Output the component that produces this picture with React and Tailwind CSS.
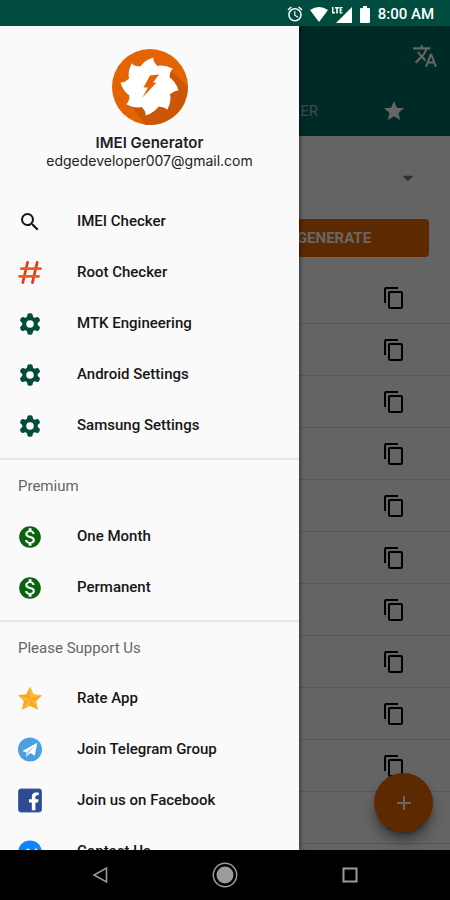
import {
  MdAlarm,
  MdArrowDropDown,
  MdAdd,
  MdContentCopy,
  MdMonetizationOn,
  MdSearch,
  MdStar,
  MdTranslate,
} from "react-icons/md";
import { FaFacebookF, FaFacebookMessenger } from "react-icons/fa";

function HashIcon() {
  return (
    <svg viewBox="0 0 25 25" className="w-[25px] h-[25px]" fill="none" strokeWidth="2.8" strokeLinecap="round">
      <path d="M10 2 5 23M20 2 15 23" stroke="#e23a1c" />
      <path d="M3.5 8.5H23.5M1.5 16.5H21.5" stroke="#f05a1a" />
    </svg>
  );
}

function GearIcon() {
  return (
    <svg viewBox="0 0 24 24" className="w-6 h-6" fill="#064c3b">
      {[0, 60, 120, 180, 240, 300].map((angle) => (
        <path key={angle} d="M8.8 6 9.4 2.6Q9.6 1.2 12 1.2T14.6 2.6L15.2 6 12 8Z" transform={`rotate(${angle} 12 12)`} />
      ))}
      <circle cx="12" cy="12" r="5.8" fill="none" stroke="#064c3b" strokeWidth="4" />
    </svg>
  );
}

function RateIcon() {
  return (
    <svg viewBox="0 0 25 25" className="w-[25px] h-[25px]">
      <path
        d="M12.5 1 16 8.5 24.3 9.5 18.4 15.2 20.4 23.6 12.5 19.6 4.6 23.6 6.6 15.2 0.7 9.5 9 8.5Z"
        fill="#fdb62f"
        stroke="#fdb62f"
        strokeLinejoin="round"
      />
      <path d="M12.5 1V13L9 8.5ZM24.3 9.5 12.5 13 18.4 15.2ZM20.4 23.6 12.5 13V19.6ZM4.6 23.6 12.5 13 6.6 15.2ZM0.7 9.5 12.5 13 9 8.5Z" fill="#f9a526" />
    </svg>
  );
}

function TelegramIcon() {
  return (
    <svg viewBox="0 0 25 25" className="w-[25px] h-[25px]">
      <circle cx="12.5" cy="12.5" r="12.5" fill="#4a9fe0" />
      <path d="M4.5 14 20 5.5 17.5 19 13 16.2 8.5 20 8.8 15.6Z" fill="#fff" />
      <path d="M8.8 15.6 17.5 8.5 11.2 16.2 8.5 20Z" fill="#a9cfee" />
    </svg>
  );
}

function FacebookIcon() {
  return (
    <svg viewBox="0 0 25 25" className="w-[25px] h-[25px]">
      <rect x="0.5" y="0.5" width="24" height="24" rx="2.5" fill="#2d4a93" stroke="#4562a8" />
      <FaFacebookF x="7" y="4" size={19} color="#fff" />
    </svg>
  );
}

function AppLogo() {
  return (
    <svg viewBox="0 0 76 76" className="w-[76px] h-[76px]">
      <circle cx="38" cy="38" r="38" fill="#e46303" />
      <path d="M58 21 76 38A38 38 0 0 1 33 75.7L17 54Z" fill="#cb5606" />
      <g fill="#fff" transform="translate(37.5 37.5)">
        <circle r="22" />
        {[0, 45, 90, 135, 180, 225, 270, 315].map((angle) => (
          <path key={angle} d="M-10-18.5Q-6-26 4-29Q3.5-25 7.5-21L0 0Z" transform={`rotate(${angle})`} />
        ))}
      </g>
      <path d="M38 26.5 47 25.5 41 33.5H44.5L30.5 48.5 36 38.5H31.5Z" fill="#e46303" />
    </svg>
  );
}

const tools = [
  { label: "IMEI Checker", icon: <MdSearch className="w-6 h-6" /> },
  { label: "Root Checker", icon: <HashIcon /> },
  { label: "MTK Engineering", icon: <GearIcon /> },
  { label: "Android Settings", icon: <GearIcon /> },
  { label: "Samsung Settings", icon: <GearIcon /> },
];

const premium = [
  { label: "One Month", icon: <MdMonetizationOn className="w-[26px] h-[26px] shrink-0 text-[#0a640f]" /> },
  { label: "Permanent", icon: <MdMonetizationOn className="w-[26px] h-[26px] shrink-0 text-[#0a640f]" /> },
];

const support = [
  { label: "Rate App", icon: <RateIcon /> },
  { label: "Join Telegram Group", icon: <TelegramIcon /> },
  { label: "Join us on Facebook", icon: <FacebookIcon /> },
  { label: "Contact Us", icon: <FaFacebookMessenger className="w-6 h-6 text-[#0a84ff]" /> },
];

function MenuSection({ title, items }) {
  return (
    <section className={title ? "mt-[7px] border-t-2 border-[#e6e6e6]" : ""}>
      {title && <h2 className="flex items-center h-[51px] px-[18px] pt-[2px] text-[15px] text-[#666666]">{title}</h2>}
      <ul>
        {items.map((item) => (
          <li key={item.label}>
            <button className="flex items-center w-full h-[51px] px-[18px] gap-[35px] text-[15px] font-medium text-[#161616]">
              <span className="flex justify-center w-6 shrink-0">{item.icon}</span>
              {item.label}
            </button>
          </li>
        ))}
      </ul>
    </section>
  );
}

function StatusBar() {
  return (
    <div className="flex items-center justify-end h-[26px] shrink-0 pt-[2px] pr-4 bg-[#004d40] text-white">
      <MdAlarm className="w-[18px] h-[18px]" />
      <svg viewBox="0 0 18 15" className="w-[18px] h-[15px] ml-[6px]" fill="currentColor">
        <path d="M0 3Q9-3 18 3L9 15Z" />
      </svg>
      <svg viewBox="0 0 20 17" className="w-5 h-[17px] ml-1" fill="currentColor">
        <path d="M20 1V17H4Z" />
        <path d="M0 1H1.5V6H3V7.5H0ZM3 1H7V2.5H5.8V7.5H4.2V2.5H3ZM7.6 1H10.5V2.2H9V3.6H10.2V4.8H9V6.2H10.5V7.5H7.6Z" />
      </svg>
      <svg viewBox="0 0 10 17" className="w-[10px] h-[17px] ml-2" fill="currentColor">
        <path d="M3 0H7V2H9Q10 2 10 3V16Q10 17 9 17H1Q0 17 0 16V3Q0 2 1 2H3Z" />
      </svg>
      <span className="ml-2 text-[15px] font-medium">8:00 AM</span>
    </div>
  );
}

function GeneratorScreen() {
  return (
    <div className="h-full overflow-hidden bg-[#fafafa]">
      <header className="bg-[#00695c] text-white">
        <div className="flex items-center justify-end h-[60px] px-3">
          <button aria-label="Translate">
            <MdTranslate className="w-[26px] h-[26px]" />
          </button>
        </div>
        <nav className="flex items-center justify-end h-[50px] pr-11">
          <button className="text-[15px] text-white/60">CHECKER</button>
          <button aria-label="Favorites" className="ml-[64px]">
            <MdStar className="w-6 h-6" />
          </button>
        </nav>
      </header>
      <div className="px-[21px]">
        <div className="flex items-center justify-end h-[83px] pr-2">
          <button aria-label="Choose model">
            <MdArrowDropDown className="w-[26px] h-[26px] text-[#757575]" />
          </button>
        </div>
        <button className="block w-[190px] h-[38px] ml-auto rounded-sm bg-[#e66600] text-[15px] font-bold text-white">
          GENERATE
        </button>
      </div>
      <ul className="mt-[15px]">
        {Array.from({ length: 11 }, (_, i) => (
          <li key={i} className="flex items-center justify-end h-[52px] pr-11 border-b border-[#dcdcdc]">
            <button aria-label="Copy">
              <MdContentCopy className="w-6 h-[26px]" />
            </button>
          </li>
        ))}
      </ul>
      <button
        aria-label="Add"
        className="absolute right-[17px] bottom-[18px] flex items-center justify-center w-[59px] h-[59px] rounded-full bg-[#e66600] text-white shadow-lg shadow-black/50"
      >
        <MdAdd className="w-6 h-6" />
      </button>
    </div>
  );
}

function Drawer() {
  return (
    <aside className="absolute inset-y-0 left-0 w-[299px] overflow-hidden bg-[#fafafa] shadow-[1px_0_4px_rgba(0,0,0,0.5)]">
      <div className="flex flex-col items-center h-[170px] pt-[23px] font-['Inter',sans-serif] text-[#222222]">
        <AppLogo />
        <h1 className="mt-[9px] text-[15px] leading-[18px] font-semibold">IMEI Generator</h1>
        <p className="text-[14px] leading-[18px]">edgedeveloper007@gmail.com</p>
      </div>
      <MenuSection items={tools} />
      <MenuSection title="Premium" items={premium} />
      <MenuSection title="Please Support Us" items={support} />
    </aside>
  );
}

function NavigationBar() {
  return (
    <nav className="flex items-center justify-between h-[50px] shrink-0 px-[92px] bg-black text-[#9b9b9b]">
      <button aria-label="Back">
        <svg viewBox="0 0 16 18" className="w-4 h-[18px]" fill="none" stroke="currentColor" strokeWidth="1.6">
          <path d="M14.5 2V16L2 9Z" />
        </svg>
      </button>
      <button aria-label="Home">
        <svg viewBox="0 0 26 26" className="w-[26px] h-[26px]" fill="none" stroke="currentColor" strokeWidth="1.5">
          <circle cx="13" cy="13" r="11.7" />
          <circle cx="13" cy="13" r="8.5" fill="currentColor" stroke="none" />
        </svg>
      </button>
      <button aria-label="Recent apps">
        <svg viewBox="0 0 16 16" className="w-4 h-4" fill="none" stroke="currentColor" strokeWidth="2">
          <rect x="1.5" y="1.5" width="13" height="13" />
        </svg>
      </button>
    </nav>
  );
}

export default function App() {
  return (
    <div className="flex flex-col h-screen font-['Roboto',sans-serif]">
      <StatusBar />
      <main className="relative flex-1 min-h-0 overflow-hidden">
        <GeneratorScreen />
        <div className="absolute inset-0 bg-black/60" />
        <Drawer />
      </main>
      <NavigationBar />
    </div>
  );
}
